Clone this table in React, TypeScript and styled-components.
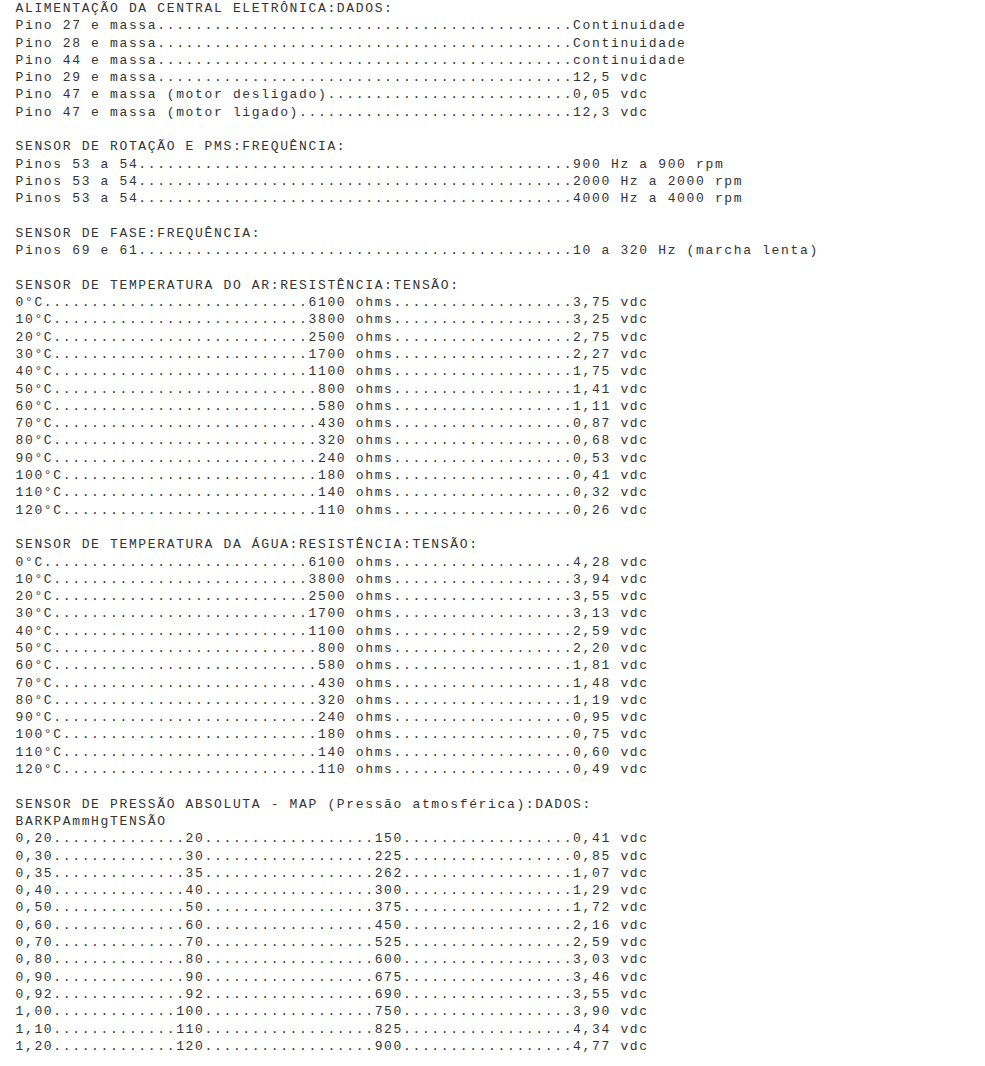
import { FC } from "react";
import styled, { createGlobalStyle } from "styled-components";

const GlobalStyle = createGlobalStyle`
  html, body {
    margin: 0;
    padding: 0;
    background: #ffffff;
  }
`;

const Page = styled.div`
  padding: 0 0 0 15.5px;
  font-family: "Liberation Mono", "Courier New", monospace;
  font-size: 13px;
  letter-spacing: 1.65px;
  line-height: 17.3px;
  color: #333333;
`;

const Section = styled.section`
  margin-bottom: 17.3px;
`;

const Title = styled.h2`
  margin: 0;
  font: inherit;
  white-space: pre;
`;

const Line = styled.div`
  white-space: pre;
`;

const VALUE_COL = 59;

// pad a label with dots so the next text starts at the given column
const lead = (left: string, col: number) =>
  left + ".".repeat(Math.max(0, col - left.length));

const temps = [0, 10, 20, 30, 40, 50, 60, 70, 80, 90, 100, 110, 120];
const ohms = [6100, 3800, 2500, 1700, 1100, 800, 580, 430, 320, 240, 180, 140, 110];
const airVdc = ["3,75", "3,25", "2,75", "2,27", "1,75", "1,41", "1,11", "0,87", "0,68", "0,53", "0,41", "0,32", "0,26"];
const waterVdc = ["4,28", "3,94", "3,55", "3,13", "2,59", "2,20", "1,81", "1,48", "1,19", "0,95", "0,75", "0,60", "0,49"];

const mapRows: [string, string, string, string][] = [
  ["0,20", "20", "150", "0,41"],
  ["0,30", "30", "225", "0,85"],
  ["0,35", "35", "262", "1,07"],
  ["0,40", "40", "300", "1,29"],
  ["0,50", "50", "375", "1,72"],
  ["0,60", "60", "450", "2,16"],
  ["0,70", "70", "525", "2,59"],
  ["0,80", "80", "600", "3,03"],
  ["0,90", "90", "675", "3,46"],
  ["0,92", "92", "690", "3,55"],
  ["1,00", "100", "750", "3,90"],
  ["1,10", "110", "825", "4,34"],
  ["1,20", "120", "900", "4,77"],
];

const simple = (label: string, value: string) => lead(label, VALUE_COL) + value;

const tempLine = (t: number, r: number, v: string) => {
  const num = String(r);
  const first = lead(`${t}°C`, 35 - num.length) + num + " ohms";
  return lead(first, VALUE_COL) + v + " vdc";
};

const mapLine = ([bar, kpa, mm, v]: [string, string, string, string]) => {
  const a = lead(bar, 20 - kpa.length) + kpa;
  const b = lead(a, 41 - mm.length) + mm;
  return lead(b, VALUE_COL) + v + " vdc";
};

interface BlockProps {
  title: string;
  lines: string[];
}

const Block: FC<BlockProps> = ({ title, lines }) => (
  <Section>
    <Title>{title}</Title>
    {lines.map((l, i) => (
      <Line key={`${i}-${l}`}>{l}</Line>
    ))}
  </Section>
);

export default function App() {
  return (
    <>
      <GlobalStyle />
      <Page>
        <Block
          title="ALIMENTAÇÃO DA CENTRAL ELETRÔNICA:DADOS:"
          lines={[
            simple("Pino 27 e massa", "Continuidade"),
            simple("Pino 28 e massa", "Continuidade"),
            simple("Pino 44 e massa", "continuidade"),
            simple("Pino 29 e massa", "12,5 vdc"),
            simple("Pino 47 e massa (motor desligado)", "0,05 vdc"),
            simple("Pino 47 e massa (motor ligado)", "12,3 vdc"),
          ]}
        />
        <Block
          title="SENSOR DE ROTAÇÃO E PMS:FREQUÊNCIA:"
          lines={[
            simple("Pinos 53 a 54", "900 Hz a 900 rpm"),
            simple("Pinos 53 a 54", "2000 Hz a 2000 rpm"),
            simple("Pinos 53 a 54", "4000 Hz a 4000 rpm"),
          ]}
        />
        <Block
          title="SENSOR DE FASE:FREQUÊNCIA:"
          lines={[simple("Pinos 69 e 61", "10 a 320 Hz (marcha lenta)")]}
        />
        <Block
          title="SENSOR DE TEMPERATURA DO AR:RESISTÊNCIA:TENSÃO:"
          lines={temps.map((t, i) => tempLine(t, ohms[i], airVdc[i]))}
        />
        <Block
          title="SENSOR DE TEMPERATURA DA ÁGUA:RESISTÊNCIA:TENSÃO:"
          lines={temps.map((t, i) => tempLine(t, ohms[i], waterVdc[i]))}
        />
        <Block
          title="SENSOR DE PRESSÃO ABSOLUTA - MAP (Pressão atmosférica):DADOS:"
          lines={["BARKPAmmHgTENSÃO", ...mapRows.map(mapLine)]}
        />
      </Page>
    </>
  );
}
